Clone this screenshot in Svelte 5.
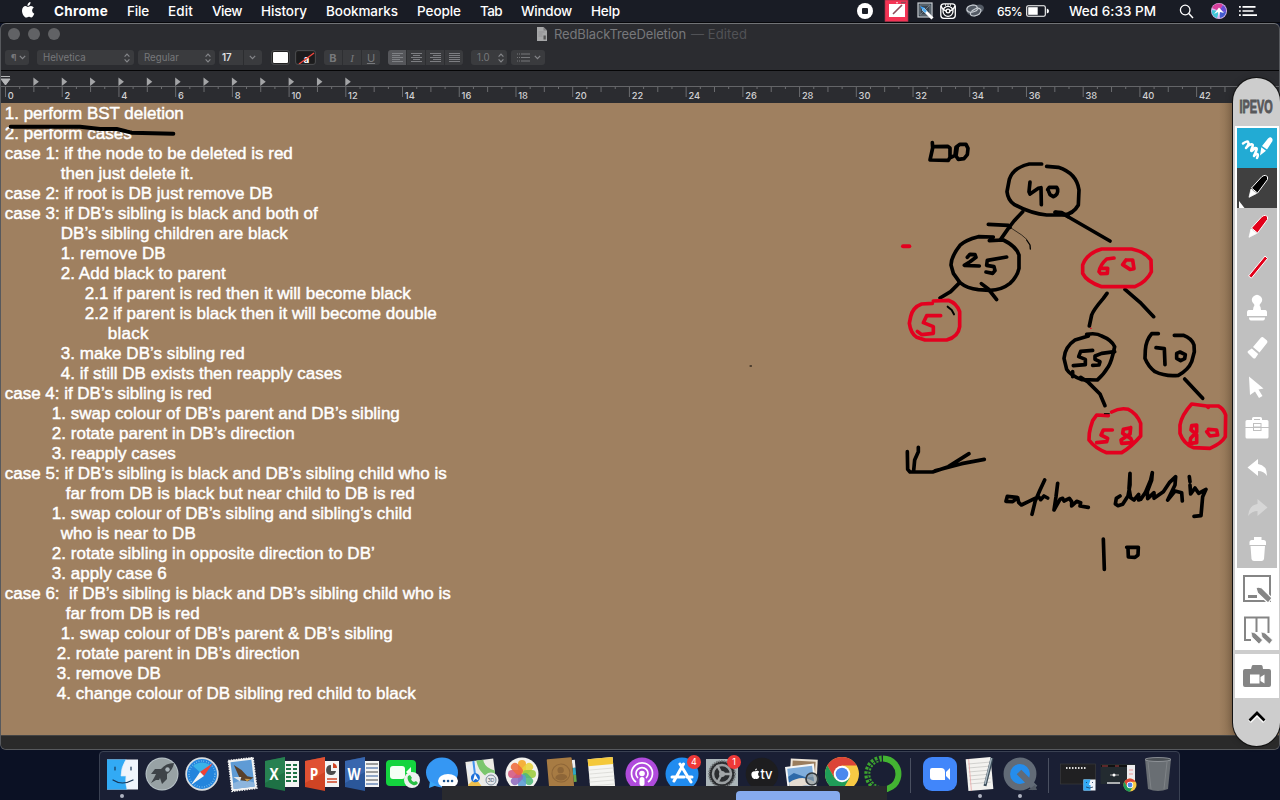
<script>
  const menus = [
    ['Chrome', 54], ['File', 22], ['Edit', 25], ['View', 30], ['History', 46],
    ['Bookmarks', 72], ['People', 44], ['Tab', 22], ['Window', 51], ['Help', 29]
  ];

  // text, left edge, right edge
  const lines = [
    ['1. perform BST deletion', 5, 184],
    ['2. perform cases', 5, 132],
    ['case 1: if the node to be deleted is red', 5, 293],
    ['then just delete it.', 61, 194],
    ['case 2: if root is DB just remove DB', 5, 273],
    ['case 3: if DB’s sibling is black and both of', 5, 318],
    ['DB’s sibling children are black', 61, 288],
    ['1. remove DB', 61, 166],
    ['2. Add black to parent', 61, 226],
    ['2.1 if parent is red then it will become black', 85, 411],
    ['2.2 if parent is black then it will become double', 85, 437],
    ['black', 108, 149],
    ['3. make DB’s sibling red', 61, 245],
    ['4. if still DB exists then reapply cases', 61, 342],
    ['case 4: if DB’s sibling is red', 5, 212],
    ['1. swap colour of DB’s parent and DB’s sibling', 52, 400],
    ['2. rotate parent in DB’s direction', 52, 295],
    ['3. reapply cases', 52, 176],
    ['case 5: if DB’s sibling is black and DB’s sibling child who is', 5, 447],
    ['far from DB is black but near child to DB is red', 66, 415],
    ['1. swap colour of DB’s sibling and sibling’s child', 52, 412],
    ['who is near to DB', 61, 196],
    ['2. rotate sibling in opposite direction to DB’', 52, 375],
    ['3. apply case 6', 52, 167],
    ['case 6:  if DB’s sibling is black and DB’s sibling child who is', 5, 451],
    ['far from DB is red', 66, 200],
    ['1. swap colour of DB’s parent & DB’s sibling', 61, 393],
    ['2. rotate parent in DB’s direction', 57, 300],
    ['3. remove DB', 57, 161],
    ['4. change colour of DB sibling red child to black', 57, 416]
  ];

  const unit = 28.36;
  const ticks = Array.from({ length: 87 }, (_, i) => i);
  const tabs = Array.from({ length: 12 }, (_, i) => i + 1);
  const petals = ['#f5a623', '#e8d33a', '#9ccc3c', '#4fb87a', '#5a9bd5', '#8e6bbf', '#d5577f', '#ee6a3c'];

  // spread the letters so that the text takes the given width
  function fit(node, width) {
    const range = document.createRange();
    range.selectNodeContents(node);
    const natural = range.getBoundingClientRect().width;
    node.style.letterSpacing = (width - natural) / node.textContent.length + 'px';
  }
</script>

{#snippet chrome(x, y, r)}
  <g transform="translate({x} {y}) scale({r / 17})">
    <circle r="17" fill="#f7c944" />
    <path d="M-14.7-8.5A17 17 0 0 1 14.7-8.5L0-8.5L-7.4 4.2Z" fill="#dc4437" />
    <path d="M-14.7-8.5A17 17 0 0 0 0 17L7.4 4.2L-7.4 4.2Z" fill="#1f9d58" />
    <circle r="8.3" fill="#fff" /><circle r="6.3" fill="#4b88ee" />
  </g>
{/snippet}

{#snippet chevrons()}
  <svg width="6" height="10" viewBox="0 0 6 10" class="ic"><path d="M.6 3.6L3 1.2L5.4 3.6M.6 6.4L3 8.8L5.4 6.4" /></svg>
{/snippet}

{#snippet down()}
  <svg width="7" height="5" viewBox="0 0 7 5" class="ic"><path d="M.8.8L3.5 3.6L6.2.8" /></svg>
{/snippet}

<div class="desktop">
  <header class="menubar">
    <svg class="apple" width="14" height="16" viewBox="0 0 14 16"><path fill="#fff" d="M9.5 0Q9.6 1.8 8.6 2.9Q7.7 3.9 6.5 3.9Q6.3 2.4 7.3 1.2Q8.3.1 9.5 0M6.9 4.9C7.6 4.9 8.5 4 10 4Q11.8 4.1 12.8 5.5Q11 6.6 11.1 8.7Q11.2 10.9 13.3 11.8Q12.7 13.5 11.6 14.8C10.4 16.2 9.7 15.1 8.3 14.8C6.8 14.6 6.2 15.6 5.2 15.6C3.6 15.6 1 12.2 1 8.8C1 5.8 2.8 4.1 4.6 4.1C5.7 4.1 6.2 4.9 6.9 4.9Z" /></svg>
    {#each menus as [name, w], i}
      <div class="menu" class:app={i === 0} style:width="{w}px"><span use:fit={w}>{name}</span></div>
    {/each}
    <div class="status">
      <svg width="130" height="23" viewBox="0 0 130 23">
        <circle cx="8" cy="11" r="8" fill="#fff" /><rect x="5" y="8" width="6" height="6" rx="1" fill="#1a1d25" />
        <rect x="28" y="0" width="23" height="21.5" fill="#f43354" stroke="#983448" stroke-width=".7" /><rect x="32" y="4" width="16" height="13" fill="#fff" /><path d="M36 14L45 5M44 2.5h5" stroke="#8e4a58" stroke-width="1.6" /><circle cx="40" cy="2.8" r=".8" fill="#fff" />
        <rect x="61" y="3" width="14" height="14" fill="#3a4651" stroke="#c9ced3" stroke-width="1.2" /><path d="M63 5h10v10h-10zM63 15L73 5" fill="none" stroke="#737c84" /><path d="M63 6L68 8L66 11Z" fill="#3ba5ff" /><path d="M66 9L75.5 18.5" stroke="#fff" stroke-width="3" /><path d="M66 9L69 12" stroke="#54aeef" stroke-width="2.5" />
        <rect x="83.8" y="3.8" width="14.5" height="14.5" rx="3" fill="#16191f" stroke="#fff" stroke-width="1.3" /><circle cx="91" cy="11.3" r="5" fill="none" stroke="#fff" stroke-width="1.3" /><path d="M84 6Q86 11 91 11Q96 11 98 6" fill="none" stroke="#fff" stroke-width="1.5" /><circle cx="91" cy="11" r="2.5" fill="#fff" /><circle cx="91" cy="11" r="1.2" fill="#222" /><path d="M88 5h1M90.5 5h1M93 5h1" stroke="#fff" stroke-width="1.5" />
        <path d="M110 12.5Q107 9 111 7Q114 3 119 5Q126 3 127 8L126 11L121 14L118 17L111 14Z" fill="#535a64" />
        <path d="M120 9Q121 5 116 5Q109 6 110 10Q111 13 116 12Q120 11 121 9M114 12Q112 16 117 16Q124 15 124 10Q122 7 118 9Q114 11 115 12" fill="none" stroke="#c7ccd2" stroke-width="1.2" />
      </svg>
      <div class="pct"><span use:fit={25}>65%</span></div>
      <svg class="bat" width="24" height="12" viewBox="0 0 24 12"><rect x=".7" y=".7" width="18.6" height="10.6" rx="1.5" fill="none" stroke="#fff" stroke-width="1.1" /><rect x="2.2" y="2.2" width="9.5" height="7.6" fill="#fff" /><path d="M20.8 3.5Q23 4 23 6Q23 8 20.8 8.5Z" fill="#fff" /></svg>
      <div class="clock"><span use:fit={87}>Wed 6:33 PM</span></div>
      <svg width="80" height="23" viewBox="0 0 80 23">
        <circle cx="6.2" cy="10" r="4.8" fill="none" stroke="#fff" stroke-width="1.3" /><path d="M9.8 13.6L14 18" stroke="#fff" stroke-width="1.5" />
        <circle cx="40" cy="11" r="8" fill="#d9b8ed" /><path d="M33 8A7.2 7.2 0 0 1 44 5L40 11Z" fill="#d83f9c" /><path d="M44 5A7.2 7.2 0 0 1 47 12L40 11Z" fill="#684cd4" /><path d="M32.8 10A7.2 7.2 0 0 0 38 18L40 11Z" fill="#41c8d6" /><path d="M47 12A7.2 7.2 0 0 1 41 18L40 11Z" fill="#435bcf" /><path d="M35 14L40 7.5L45 13L41 12L40 17L39 12Z" fill="#fff" />
        <path d="M60 6.8h1.8M60 11h1.8M60 15.2h1.8M63.5 6.8h13M63.5 11h11M63.5 15.2h14.5" stroke="#fff" stroke-width="1.7" />
      </svg>
    </div>
  </header>

  <section class="window">
    <div class="title">
      <i></i><i></i><i></i>
      <div class="name">
        <svg width="10" height="14" viewBox="0 0 10 14"><path d="M0 0h6.5L10 3.5V14H0Z" fill="#a6a7a8" /><path d="M6.5 0V3.5H10" fill="#7e7f80" /><path d="M1.5 5h6M1.5 7h4M1.5 9h4" stroke="#8a8b8c" stroke-width=".7" /><rect x="6.5" y="8.5" width="2.3" height="4" fill="#555" /></svg>
        <div class="doc"><span use:fit={132}>RedBlackTreeDeletion</span></div><div class="dim"><span use:fit={56}>— Edited</span></div>
      </div>
    </div>
    <div class="tools">
      <div class="ctl para"><b>¶</b>{@render down()}</div>
      <div class="ctl face"><span>Helvetica</span>{@render chevrons()}</div>
      <div class="ctl style"><span>Regular</span>{@render chevrons()}</div>
      <div class="ctl size"><b>17</b><em></em>{@render down()}</div>
      <div class="swatch"></div>
      <div class="swatch no"><b>a</b><svg width="19" height="13" viewBox="0 0 19 13"><path d="M2 12L17 1" stroke="#f2463d" stroke-width="1.4" /></svg></div>
      <div class="ctl seg biu"><span class="b">B</span><span class="i">I</span><span class="u">U</span></div>
      <div class="ctl seg al">
        <span class="on"><svg width="13" height="9" viewBox="0 0 13 9"><path d="M1 .5h11M1 2.5h8M1 4.5h11M1 6.5h8M1 8.5h11" /></svg></span>
        <span><svg width="13" height="9" viewBox="0 0 13 9"><path d="M1 .5h11M3 2.5h7M1 4.5h11M3 6.5h7M1 8.5h11" /></svg></span>
        <span><svg width="13" height="9" viewBox="0 0 13 9"><path d="M1 .5h11M4 2.5h8M1 4.5h11M4 6.5h8M1 8.5h11" /></svg></span>
        <span><svg width="13" height="9" viewBox="0 0 13 9"><path d="M1 .5h11M1 2.5h11M1 4.5h11M1 6.5h11M1 8.5h11" /></svg></span>
      </div>
      <div class="ctl space"><span>1.0</span>{@render chevrons()}</div>
      <div class="ctl list"><svg width="13" height="9" viewBox="0 0 13 9"><path d="M0 1h1M2 1h1M4 1h9M0 4.5h1M2 4.5h1M4 4.5h9M0 8h1M2 8h1M4 8h9" stroke="#77787b" /></svg>{@render down()}</div>
    </div>
    <svg class="ruler" width="1279" height="32" viewBox="1 0 1279 32">
      <path d="M0 15.5H1280" stroke="#646568" />
      {#each ticks as t}
        <path d="M{5.5 + (t * unit) / 2} 16v{t % 4 === 0 ? 10 : t % 2 === 0 ? 5 : 2}" stroke="#6b6c6f" />
        {#if t % 4 === 0}<text x={7.8 + (t * unit) / 2} y="28">{t / 2}</text>{/if}
      {/each}
      {#each tabs as t}
        <path d="M{5 + t * unit} 6.500l5.500 4.200l-5.500 4.200z" fill="#a4a5a7" />
      {/each}
      <path d="M1 5.500H10M1 8h9L5.500 14z" fill="#b5b6b8" stroke="#b5b6b8" stroke-width="1" />
    </svg>
    <div class="paper">
      {#each lines as [text, x, end]}
        <div class="line" style:padding-left="{x - 1.2}px"><span use:fit={end - x}>{text}</span></div>
      {/each}
    </div>
    <div class="foot"></div>
  </section>

  <svg class="ink" width="1280" height="800" viewBox="0 0 1280 800">
    <g transform="translate(0 100) scale(.33333)">
      <path d="M32 80L240 80L300 87L350 87L395 98L520 101" stroke-width="12" />
    </g>
    <path d="M750 366h1.5" stroke-width="1" />
    <g transform="translate(880 120) scale(.33333)">
      <path d="M157 68L158 84L150 120L205 121L210 112L210 84L203 79L160 80M213 112L225 106L228 82L240 73L258 73L264 85L262 104L252 116L235 118L228 108L232 80" />
      <path d="M485 132L448 132Q400 142 388 178L381 215Q384 240 402 253Q450 280 500 285L550 285Q580 282 595 255L597 210Q590 160 535 142L500 139" />
      <path d="M450 186L447 215L450 222L475 205L483 203L484 254M503 209L508 202L530 202L533 208Q535 225 520 230L510 224L505 212" />
      <path d="M428 275L402 303L385 325L362 358M325 313L385 316L390 322M527 276L545 278L565 290" />
      <path d="M390 322L425 345L440 358" stroke-width="2" /><path d="M440 360L450 375L451 387" stroke-width="4" />
      <path d="M340 351L295 350Q255 360 240 376Q214 408 213 435L220 460L240 488Q262 506 295 509L330 511Q365 510 390 490Q412 470 417 445L417 405Q410 380 370 360L328 362" />
      <path d="M262 412L270 403L285 404L288 412L270 425L253 436L298 438M380 411L322 421L320 436L342 440L345 452L338 460L318 456" />
      <path d="M304 491L325 507L350 539M239 488L212 515L180 534" />
      <g class="red">
        <path d="M69 379L88 379" stroke-width="12" />
        <path d="M157 550L125 552Q98 562 92 590L88 610Q92 640 110 652L135 660L200 660Q235 650 239 620L239 575Q230 550 205 541L160 543" />
        <path d="M182 587L140 587L130 608L160 620L160 640L125 644L112 634" />
      </g>
      <path d="M203 560L215 570L222 583" stroke-width="6" />
    </g>
    <g transform="translate(1040 180) scale(.33333)">
      <path d="M45 97L75 105L210 183M201 340L190 355Q160 390 155 405L148 438M255 328L300 367L341 410" />
      <path d="M145 468L140 463Q170 458 185 468Q215 480 224 500Q215 545 205 560Q190 585 172 600L125 599Q90 585 80 568L72 535Q75 500 105 480L145 468M98 575L98 590" />
      <path d="M158 511L122 514L116 530L136 538L136 554L100 557M224 515L185 520L165 528L165 538L180 545L177 555L158 556" />
      <path d="M122 592L145 607L180 642L195 677M434 597L488 655" />
      <path d="M355 461L335 461Q318 480 316 510L315 535Q325 560 345 575Q375 590 415 586Q445 570 455 545L463 515L462 495Q455 475 430 466L403 466M348 503L373 506L375 554M410 520L420 516L436 524L434 536L422 542L410 535L410 522" />
      <g class="red">
        <path d="M151 445h3" stroke-width="3" />
        <path d="M185 207L275 207Q315 215 333 240L334 275Q320 305 285 320L185 320Q140 305 128 280L128 255Q140 220 185 207ZM222 234L200 237Q180 255 177 275L182 281L202 280L203 265L180 265M258 240L278 240L282 266L270 268L248 254L258 240" />
        <path d="M205 707L170 705L158 722Q150 745 148 760L147 780Q165 805 200 818L245 818Q275 800 302 768L302 730Q290 700 265 688Q240 682 215 696M217 750L190 750L183 765L203 775L200 785L170 788M272 743L250 748L248 760L272 775L278 788L245 790L243 780L270 762L272 743" />
        <path d="M505 682L500 678L455 672Q425 705 420 735L420 760Q430 790 460 803L510 805Q545 790 556 770L557 705Q550 685 535 678L500 678M470 735L455 737L453 750L470 765L470 788L450 790L452 775L470 755L470 735M505 748L530 750L533 765L510 768L500 755" />
      </g>
      <path d="M193 701h15" stroke-width="3" />
    </g>
    <g transform="translate(880 430) scale(.33333)">
      <path d="M82 65L83 118L90 126L158 126L205 110L267 71M115 52L115 65L104 90L101 122M165 122L245 101L313 88" />
      <path d="M410 202L382 199L378 214L398 215L413 203L416 217L424 225L445 215L465 205L476 200L482 209L492 198L503 204M494 150L480 180L466 212L456 253M533 160L528 200L522 240L540 208L548 205L552 213L568 205L575 215L575 228L590 214L602 218L600 228L625 232" />
      <path d="M720 198L709 205L706 222L714 227L728 223L744 198L750 165L750 130L747 175L752 203L762 210L776 193L776 210L782 208L796 188L812 150L817 128L815 150L802 185L803 206L822 188L822 205L850 185L868 158L887 140L885 165L863 210L885 183L905 188L907 213M928 140L930 155M930 165L932 192L945 174L956 190L978 178L968 200L963 257L942 259" />
      <path d="M670 327L673 418M740 352L775 352L774 375L765 382L745 381L744 355" />
    </g>
  </svg>

  <aside class="ipevo">
    <div class="brand"><span>IPEVO</span></div>
    <div class="panel">
      <svg width="40" height="522" viewBox="0 0 40 522">
        <rect width="40" height="440" fill="#c0c0c0" />
        <rect width="40" height="40" fill="#22abd4" /><rect y="40" width="40" height="40" fill="#404040" />
        <path d="M6 15.5C12 11 13 15 9 20C12 16 18 14 15 20C13 25 15 23 18 20C22 19 18 25 17 28C20 24 22 26 20 30" fill="none" stroke="#fff" stroke-width="2.500" stroke-linecap="round" stroke-linejoin="round" />
        <path d="M25 18L31 10.5Q34 8 35.500 11V13L30 21.500ZM24.300 19.200L29 22.800L23 27.500Z" fill="#fff" />
        <g stroke="#fff" stroke-linejoin="round"><path d="M14.500 60L25 48.500Q29 46 30.500 49V51.500L20.500 65Z" fill="#000" /><path d="M14 61L19.500 65.500L12 69.300Z" fill="#fff" stroke-width=".8" />
        <path d="M14.500 100L25 88.500Q29 86 30.500 89V91.500L20.500 105Z" fill="#e2001a" /><path d="M14 101L19.500 105.500L12 109.300Z" fill="#fff" stroke-width=".8" />
        <path d="M11.500 148L28 128L30.500 130.500L14.500 150Z" fill="#e2001a" /></g>
        <path d="M2 73V80H7.500Z" fill="#fff" />
        <g fill="#fff">
          <path d="M16.500 179Q18.500 177 16 175A5 5 0 1 1 24 175Q21.500 177 23.500 179L24 182H28.500Q30 182.500 30 184V188H10V184Q10 182.500 11.500 182H16ZM12 189.500H28Q28 192.500 26 192.500H14Q12 192.500 12 189.500Z" />
          <path d="M16 219L24 209.500Q25.500 208.500 27 210L30 212.500Q31 214 30 215L22.500 224.500ZM14.800 220.400L21.200 226L18.500 230Q17.500 231 16 230L11 225Q10 224 11 223Z" />
          <path d="M12 248.500L26.500 260.500L21.500 261.500L25.500 268L22 270L18 263.500L13 267Z" />
          <path d="M15 292V290.500Q15 289 16.500 289H23.500Q25 289 25 290.500V292H30Q31.500 292 31.500 293.500V299H8.500V293.500Q8.500 292 10 292ZM17 292H23V291H17ZM8.500 300H31.500V309Q31.500 310.500 30 310.500H10Q8.500 310.500 8.500 309Z" />
          <path d="M10.500 339.500L21 331V336Q30 337 30 348Q27 343 21 343V348Z" />
          <path d="M17 409H24.500V412H27Q29 412.500 29 414V417H12.500V414Q12.500 412.500 14.500 412H17ZM13.500 418H28L27 431Q26.500 433 24.500 433H17Q15 433 14.500 431Z" />
        </g>
        <rect x="16.500" y="295.500" width="7.500" height="7" fill="none" stroke="#c0c0c0" stroke-width="1" /><path d="M17 299h7" stroke="#c0c0c0" />
        <path d="M30.500 379.500L20.500 371V376Q12 377 11 388Q15 383 20.500 383V388Z" fill="#d6d6d6" />
        <g fill="none" stroke="#858585" stroke-width="2">
          <rect x="7" y="448" width="26" height="25" /><path d="M11 468.500H20" stroke-width="3" />
          <path d="M14 512H8V489.500H31.500V505M19.500 489.500V504" />
        </g>
        <path d="M19 460L21 459L25 460L35 470L31 475L20.500 465Z" fill="#858585" stroke="#fff" stroke-width="1.200" />
        <path d="M14 504L18 505L25.500 512L22 516L15 509ZM24 504L28 505L35.500 512L32.500 516L25 509Z" fill="#858585" stroke="#fff" stroke-width=".7" />
      </svg>
    </div>
    <div class="cam">
      <svg width="28" height="24" viewBox="0 0 28 24"><path d="M2 5H8L9 1.500Q9.500 1 10 1H18Q19 1 19.500 2L20 5H26Q28 5 28 7V21Q28 23 26 23H2Q0 23 0 21V7Q0 5 2 5Z" fill="#858585" /><path d="M7 10.500H16.500V19.500H7ZM17.500 13L21.500 10.500V19.500L17.500 17Z" fill="#fff" /></svg>
    </div>
    <svg class="up" width="18" height="12" viewBox="0 0 18 12"><path d="M1.500 10.500L9 3L16.500 10.500" fill="none" stroke="#fff" stroke-width="4" /><path d="M1.500 9.500L9 2L16.500 9.500" fill="none" stroke="#000" stroke-width="2.700" /></svg>
  </aside>

  <footer class="dock">
    <svg viewBox="0 0 40 44"><rect x="5" y="5.500" width="31" height="30" fill="#f0f5fc" /><path d="M5 5.500H24Q19 13 19 22H24Q23 29 25 35.500H5Z" fill="#32aaf5" /><path d="M24 5.500Q19 13 19 22H24Q23 29 25 35.500" fill="none" stroke="#dceaf5" stroke-width=".6" /><path d="M11 26Q20 32 31 26M13 13V16M29 13V16" fill="none" stroke="#173555" stroke-width="1.200" stroke-linecap="round" /><circle cx="20" cy="42" r="2" fill="#aeb3c0" /></svg>
    <svg viewBox="0 0 40 44"><circle cx="20" cy="20" r="16.500" fill="#b9c3c9" /><circle cx="20" cy="20" r="15.500" fill="#98a2a5" /><path d="M32 9Q24 9 19 15L13 15L9 20H14L12 24L9 29L14 26L17 26L18 24L20 30L25 25L25 20Q31 16 32 9Z" fill="#3e4348" /><circle cx="25.500" cy="15.500" r="2.200" fill="#a9b3b9" /></svg>
    <svg viewBox="0 0 40 44"><circle cx="20" cy="20" r="16.700" fill="#d9dde0" /><circle cx="20" cy="20" r="15" fill="#2485dd" /><path d="M11 12A13 13 0 0 1 29 12L20 20Z" fill="#3ab2e8" /><circle cx="20" cy="20" r="13" fill="none" stroke="#aeddf8" stroke-dasharray=".5 2" stroke-width="1.500" /><path d="M31 9L18 18L22 22Z" fill="#ee4136" /><path d="M9 31L18 18L22 22Z" fill="#f5f5f5" /></svg>
    <svg viewBox="0 0 40 44"><g transform="rotate(-7 20 20)"><rect x="8" y="5" width="25" height="31" fill="#f2f2f2" stroke="#f2f2f2" stroke-width="1.500" stroke-dasharray="1.500 1" /><rect x="10" y="7" width="21" height="27" fill="#5f9bd5" /><path d="M10 28Q20 24 31 30V34H10Z" fill="#8cb5de" /><path d="M13 10L20 16L25 23L31 25L25 28L18 26Q16 20 13 10Z" fill="#59402a" /><path d="M11 22L19 23L17 27Z" fill="#e0e4e8" /><path d="M22 25L28 26L24 28Z" fill="#c99947" /></g></svg>
    {#each [['X', '#1e7145', '#2c8a58'], ['P', '#d04424', '#e8593c'], ['W', '#2b579a', '#3f6fb8']] as [letter, dark, light], i}
      <svg viewBox="0 0 40 44"><rect x="20" y="7" width="17" height="26" fill="#f4f4f4" />
        {#if i === 0}<path d="M24 11h5M31 11h4M24 15h5M31 15h4M24 19h5M31 19h4M24 23h5M31 23h4M24 27h5M31 27h4" stroke={dark} stroke-width="2" />
        {:else if i === 1}<path d="M29 11A5 5 0 1 0 34 17H29Z" fill="#4b4b4b" /><path d="M31 9V14H35Q35 10 31 9Z" fill={dark} /><path d="M25 25h10M25 28h10" stroke={dark} stroke-width="1.500" />
        {:else}<path d="M24 10h12M24 18h12M24 26h12" stroke="#444" stroke-width="1.200" /><path d="M24 14h12M24 22h12M24 30h12" stroke={dark} stroke-width="1.200" />{/if}
        <path d="M3 7L23 3V37L3 33Z" fill={dark} /><path d="M3 7L23 3V18L3 29Z" fill={light} opacity=".65" /><text x="0" y="0" class="office" transform="translate(12 26) scale(.85 1)">{letter}</text></svg>
    {/each}
    <svg viewBox="0 0 40 44"><rect x="4" y="6" width="30" height="26" rx="4" fill="#14d43f" /><rect x="8" y="12" width="15" height="13" rx="3" fill="#f4fff5" /><path d="M24 18L29 13V23Z" fill="#f4fff5" /><circle cx="30" cy="26" r="8" fill="#eef1f0" /><path d="M26 22L28 21L30 24L29 25Q30 28 32 28L34 27L36 29Q34 32 31 31Q26 29 25.500 24Z" fill="#26bf43" /></svg>
    <svg viewBox="0 0 40 44"><ellipse cx="20" cy="18.500" rx="16" ry="15" fill="#3597f3" /><path d="M8 27L7 34L15 31Z" fill="#3aa6f8" /><ellipse cx="26" cy="27" rx="10" ry="7" fill="#fff" /><path d="M22 27h.1M26 27h.1M30 27h.1" stroke="#20558e" stroke-width="2.500" stroke-linecap="round" /></svg>
    <svg viewBox="0 0 40 44"><g transform="rotate(-7 20 20)"><rect x="5" y="6" width="28" height="29" fill="#ecebe5" /><path d="M16 6L23 6Q23 14 33 18V28Q17 22 16 6Z" fill="#7bc66d" /><path d="M5 10L14 6L19 35H11Z" fill="#e9edf4" /><path d="M13 6V34" stroke="#4694ec" stroke-width="2" /><path d="M5 29L13 23L20 35H5Z" fill="#efc04c" /><circle cx="13" cy="23" r="4.500" fill="#1e6fd9" /><path d="M13 19L16 26L13 24L10 26Z" fill="#fff" /></g><circle cx="29" cy="26" r="7.500" fill="#e8eaec" /><circle cx="29" cy="26" r="5" fill="none" stroke="#7c8a98" /><text x="29" y="28" class="tiny">3D</text></svg>
    <svg viewBox="0 0 40 44"><circle cx="20" cy="20" r="16.500" fill="#f3f2ef" />{#each petals as colour, i}<rect x="16" y="6" width="8" height="13.500" rx="4" fill={colour} opacity=".88" transform="rotate({i * 45} 20 20)" />{/each}</svg>
    <svg viewBox="0 0 40 44"><g transform="rotate(-5 20 20)"><path d="M31 7h3v8h-3z" fill="#eee" /><path d="M31 15h3v7h-3z" fill="#31a9c4" /><path d="M31 22h3v7h-3z" fill="#68a849" /><rect x="6" y="4" width="25" height="33" rx="1" fill="#a77b43" /><circle cx="19" cy="19" r="9" fill="none" stroke="#8e6638" stroke-width="1" /><circle cx="19" cy="16" r="3.200" fill="#8e6638" /><path d="M13 24Q13 20 19 20Q25 20 25 24Q19 29 13 24Z" fill="#8e6638" /></g></svg>
    <svg viewBox="0 0 40 44"><g transform="rotate(-5 20 20)"><rect x="7" y="4" width="25" height="32" fill="#f5f5f2" /><rect x="7" y="4" width="25" height="7" fill="#f4c83a" /><path d="M7 15h25M7 19h25M7 23h25M7 27h25M7 31h25" stroke="#d5d5d1" stroke-width=".7" /></g></svg>
    <svg viewBox="0 0 40 44"><circle cx="20" cy="20" r="16.500" fill="#b04bdc" /><g fill="none" stroke="#fff" stroke-width="1.700"><path d="M14 28A10.500 10.500 0 1 1 26 28M16 24A6 6 0 1 1 24 24" /></g><circle cx="20" cy="19.500" r="2.800" fill="#fff" /><rect x="17.500" y="23" width="5" height="9" rx="2.500" fill="#fff" /></svg>
    <svg viewBox="0 0 40 44"><circle cx="20" cy="20" r="16.500" fill="#208cf0" /><path d="M21.500 10L12 27M18 10L29 28M10 23H22M25 23H30" stroke="#fff" stroke-width="3" stroke-linecap="round" /><circle cx="32" cy="8" r="7" fill="#ee3938" /><text x="32" y="11" class="badge">4</text></svg>
    <svg viewBox="0 0 40 44"><rect x="4" y="5" width="32" height="31" fill="#abb5b9" /><circle cx="20" cy="20" r="13" fill="#2b2d30" stroke="#777c7f" stroke-width="2" stroke-dasharray="1.500 1" /><circle cx="20" cy="20" r="9" fill="none" stroke="#9b9fa2" stroke-width="2.500" /><path d="M20 20L30 20M20 20L15 11M20 20L15 29" stroke="#a2a6a8" stroke-width="2.500" /><circle cx="20" cy="20" r="3" fill="#a2a6a8" /><circle cx="32" cy="8" r="7" fill="#ee3938" /><text x="32" y="11" class="badge">1</text></svg>
    <svg viewBox="0 0 40 44"><circle cx="20" cy="20" r="16.300" fill="#1d1d1f" /><path d="M15 14.500Q15 16.500 13 16.500Q13 14.700 15 14.500M13.300 17.200Q16 16 17.200 17.700Q15.600 19 16.200 21Q16.600 22 17.600 22.500Q16 26 13.500 24.700Q10.600 26 9.600 22Q8.400 17 13.300 17.200Z" fill="#fff" /><text x="24.500" y="24.800" class="tv">tv</text></svg>
    <svg viewBox="0 0 40 44"><g transform="rotate(3 20 20)"><rect x="8" y="5" width="27" height="22" fill="#eee5d8" /><rect x="10" y="7" width="23" height="18" fill="#9a7d5e" /></g><g transform="rotate(-7 20 20)"><rect x="4" y="11" width="29" height="25" fill="#f5f6f6" /><rect x="6" y="13" width="25" height="19" fill="#80aedc" /><path d="M6 21L12 18L24 24H31V32H6Z" fill="#2d6aa9" /><path d="M6 27Q20 20 31 29V32H6Z" fill="#e5dcd0" /></g><circle cx="30" cy="25" r="6" fill="#8e9aa0" fill-opacity=".7" stroke="#34393d" stroke-width="1.700" /></svg>
    <svg viewBox="0 0 40 44">{@render chrome(20, 20, 17)}</svg>
    <svg viewBox="0 0 40 44"><path d="M21 4.500A15.500 15.500 0 1 1 17 35" fill="none" stroke="#43b432" stroke-width="6" /><path d="M17 35A15.500 15.500 0 0 1 20 4.500" fill="none" stroke="#3da52f" stroke-width="6" stroke-dasharray="2.500 1.600" /><path d="M15 33A14 14 0 0 1 18 6" fill="none" stroke="#1b2036" stroke-width="1" stroke-dasharray="3 1" /></svg>
    <hr />
    <svg viewBox="0 0 40 44"><rect x="3" y="3" width="34" height="34" rx="9" fill="#4186fa" /><path d="M12 14H21Q25 14 25 18V26H13Q10 26 10 23V16Q10 14 12 14ZM26 18L30 14V26L26 22Z" fill="#fff" /></svg>
    <svg viewBox="0 0 40 44"><g transform="rotate(-5 20 20)"><rect x="7" y="4" width="25" height="32" fill="#f3f2ef" /><path d="M9 9h21M9 13h21M9 17h21M9 21h21M9 25h21M9 29h21" stroke="#c4c4c1" stroke-width=".7" /><path d="M10 4V36" stroke="#e9a0a0" stroke-width=".7" /></g><path d="M32 4L25 32" stroke="#3b4c59" stroke-width="3" /><path d="M31.500 4L25 30" stroke="#a6b4bd" stroke-width="1.500" /><circle cx="20" cy="42" r="2" fill="#aeb3c0" /></svg>
    <svg viewBox="0 0 40 44"><circle cx="20" cy="20" r="13.200" fill="#258dec" stroke="#626b77" stroke-width="6.500" /><path d="M19 18L35 34" stroke="#626b77" stroke-width="6.500" /><path d="M28 36H37L35 31" fill="#525a65" /><circle cx="20" cy="42" r="2" fill="#aeb3c0" /></svg>
    <hr />
    <svg viewBox="0 0 40 44"><rect x="2.500" y="10" width="35" height="20" fill="#202022" stroke="#39393b" stroke-width=".7" /><path d="M8 14h20" stroke="#ddd" stroke-width="2" stroke-dasharray="1.500 1.500" /><rect x="25.500" y="25.500" width="12" height="11" fill="#f0f5fc" /><path d="M25.500 25.500H32.500L31 31H32.500V36.500H25.500Z" fill="#32aaf5" /><path d="M28 33Q31.500 35 35 33M28.500 28V29M34.500 28V29" fill="none" stroke="#173555" stroke-width=".8" /></svg>
    <svg viewBox="0 0 40 44"><rect x="2.500" y="10" width="35" height="20" fill="#232b30" /><path d="M3 12h34" stroke="#111" stroke-width="2" /><path d="M4 12h6M17 12h4" stroke="#a84045" /><rect x="29" y="11" width="8" height="19" fill="#ecebed" /><path d="M31 16h4M31 20h4" stroke="#e99" /><path d="M12 21h9" stroke="#aaa" /><circle cx="16" cy="21" r="1.500" fill="#fff" /><path d="M9 29h13" stroke="#ddd" stroke-width="1.500" />{@render chrome(32, 31, 6.5)}</svg>
    <svg viewBox="0 0 40 44"><path d="M7 5L10 35Q20 39 30 35L33 5Z" fill="#696e73" /><path d="M10 8L13 35M29 8L26 35" stroke="#8c9094" stroke-width="1" opacity=".6" /><ellipse cx="20" cy="5.500" rx="13" ry="2" fill="#4c5156" stroke="#9ca0a4" stroke-width=".8" /></svg>
  </footer>
  <div class="share"><div></div></div>
</div>

<style>
  :global(body) { margin: 0; overflow: hidden; background: #090f20; }
  .desktop { position: relative; width: 1280px; height: 800px; overflow: hidden; background: #0b1124; font-family: Inter, "Liberation Sans", sans-serif; }
  svg { display: block; flex: none; }
  span { white-space: pre; }
  .menubar { display: flex; align-items: center; gap: 19px; height: 22px; padding-left: 21px; background: #191c25; color: #fff; font-size: 13.5px; font-weight: 500; border-bottom: 1px solid #07080b; }
  .apple { margin-top: -2px; }
  .menu { flex: none; white-space: nowrap; line-height: 22px; }
  .menu.app { font-weight: 700; }
  .status { position: absolute; left: 857px; display: flex; align-items: center; height: 22px; }
  .pct { width: 28px; padding-left: 10px; font-size: 12px; }
  .bat { margin-left: 1px; }
  .clock { width: 87px; margin: 0 23px 0 19px; white-space: nowrap; }

  .window { position: absolute; left: 0; top: 23px; width: 1280px; height: 727px; box-sizing: border-box; border: 1px solid #57595d; border-top-color: #717376; border-radius: 6px; overflow: hidden; background: #2b2c30; display: flex; flex-direction: column; }
  .title { display: flex; align-items: center; height: 21px; box-sizing: border-box; padding: 0 0 1px 7px; gap: 8px; }
  .title i { width: 12px; height: 12px; border-radius: 50%; background: #616265; }
  .name { display: flex; align-items: center; margin-left: 469px; font-size: 13px; line-height: 16px; color: #77787b; }
  .doc { width: 132px; margin-left: 7px; }
  .dim { margin-left: 5px; width: 60px; color: #515256; white-space: nowrap; }
  .tools { display: flex; align-items: center; height: 26px; padding-left: 4px; color: #77787b; font-size: 9.7px; border-bottom: 1px solid #050506; box-sizing: border-box; }
  .ctl { display: flex; align-items: center; justify-content: space-between; box-sizing: border-box; height: 15px; border-radius: 3px; background: #3a3b3e; padding: 0 4px 0 6px; }
  .ic { fill: none; stroke: #85868a; stroke-width: 1.2; }
  .para { width: 24px; margin-right: 8px; padding: 0 3px 0 6px; }
  .para b { font-size: 9px; }
  .face { width: 97px; margin-right: 4px; }
  .style { width: 77px; margin-right: 4px; }
  .size { width: 43px; margin-right: 10px; padding: 0 6px 0 3px; color: #e2e2e3; }
  .size em { width: 1px; height: 15px; margin-left: 6px; background: #2c2d30; }
  .size b { font-weight: 600; }
  .swatch { width: 15px; height: 11px; background: #fff; border: 1px solid #222; outline: 1px solid #47484b; border-radius: 2px; margin-right: 7px; }
  .swatch.no { display: grid; background: #1b1b1d; width: 17px; margin-right: 9px; color: #fff; place-items: center; font-size: 10px; line-height: 10px; }
  .swatch.no > * { grid-area: 1 / 1; }
  .seg { padding: 0; gap: 1px; overflow: hidden; background: #2e2f32; }
  .seg > span { flex: 1; height: 15px; display: flex; align-items: center; justify-content: center; background: #3a3b3e; }
  .seg .on { background: #55565a; }
  .biu { width: 56px; margin-right: 8px; font-size: 11px; }
  .b { font-weight: 700; }
  .i { font-family: "Liberation Serif", serif; font-style: italic; }
  .u { text-decoration: underline; }
  .al { width: 75px; margin-right: 8px; }
  .al path { stroke: #85868a; stroke-width: 0.9; }
  .space { width: 36px; margin-right: 4px; padding-right: 3px; }
  .list { width: 34px; padding-right: 4px; }
  .ruler { height: 32px; background: #2b2c30; }
  .ruler text { font-size: 9.3px; font-weight: 500; fill: #d1d1d3; }
  .paper { height: 632px; box-sizing: border-box; padding-top: 1px; background: linear-gradient(90deg, #9f8060 0 1218px, #8a6e50 1232px); color: #fff; font-family: "Liberation Sans", sans-serif; font-size: 17px; -webkit-text-stroke: 0.45px #fff; }
  .line { height: 20px; line-height: 20px; white-space: nowrap; }
  .foot { flex: 1; background: #2a2a2a; border-top: 1px solid #444; }

  .ink { position: absolute; left: 0; top: 0; fill: none; stroke: #000; stroke-width: 11; stroke-linecap: round; stroke-linejoin: round; }
  .ink .red { stroke: #e3001f; }

  .ipevo { position: absolute; left: 1233px; top: 78px; width: 47px; height: 668px; border-radius: 24px; background: #cdcdcd; box-shadow: 0 0 0 1px #111, -2px 0 6px rgba(0, 0, 0, 0.2); display: flex; flex-direction: column; align-items: center; }
  .brand { height: 48px; display: flex; align-items: center; justify-content: center; padding-top: 8px; box-sizing: border-box; font: 700 19px/19px "Liberation Sans", sans-serif; color: #58585a; }
  .brand span { transform: scaleX(0.57); margin: 0 -20px; -webkit-text-stroke: 1px #58585a; }
  .panel { flex: none; padding: 2px 2px 0; height: 522px; background: #fff; }
  .cam { flex: none; width: 44px; height: 44px; margin-top: 4px; background: #fff; display: flex; align-items: center; justify-content: center; }
  .up { margin-top: 13px; }

  .dock { position: absolute; left: 99px; top: 751px; width: 1081px; height: 54px; box-sizing: border-box; border: 1px solid #3a4152; border-radius: 4px; background: #1a1f34; padding: 2px 2px 0; display: flex; }
  .dock svg { width: 40px; height: 44px; }
  .dock hr { flex: none; width: 1px; height: 35px; margin: 4px 9px 0 8px; border: 0; background: #4a5061; }
  .dock text { text-anchor: middle; fill: #fff; }
  .office { font: 700 16px "Open Sans", sans-serif; }
  .dock .tiny { font-size: 5px; fill: #456; }
  .badge { font-size: 9px; }
  .tv { font-size: 13px; font-weight: 500; }
  .share { position: absolute; left: 442px; top: 786px; width: 445px; height: 14px; background: #292a2e; display: flex; padding: 5px 0 0 294px; box-sizing: border-box; }
  .share div { width: 104px; border-radius: 4px 4px 0 0; background: #86abee; }
</style>
